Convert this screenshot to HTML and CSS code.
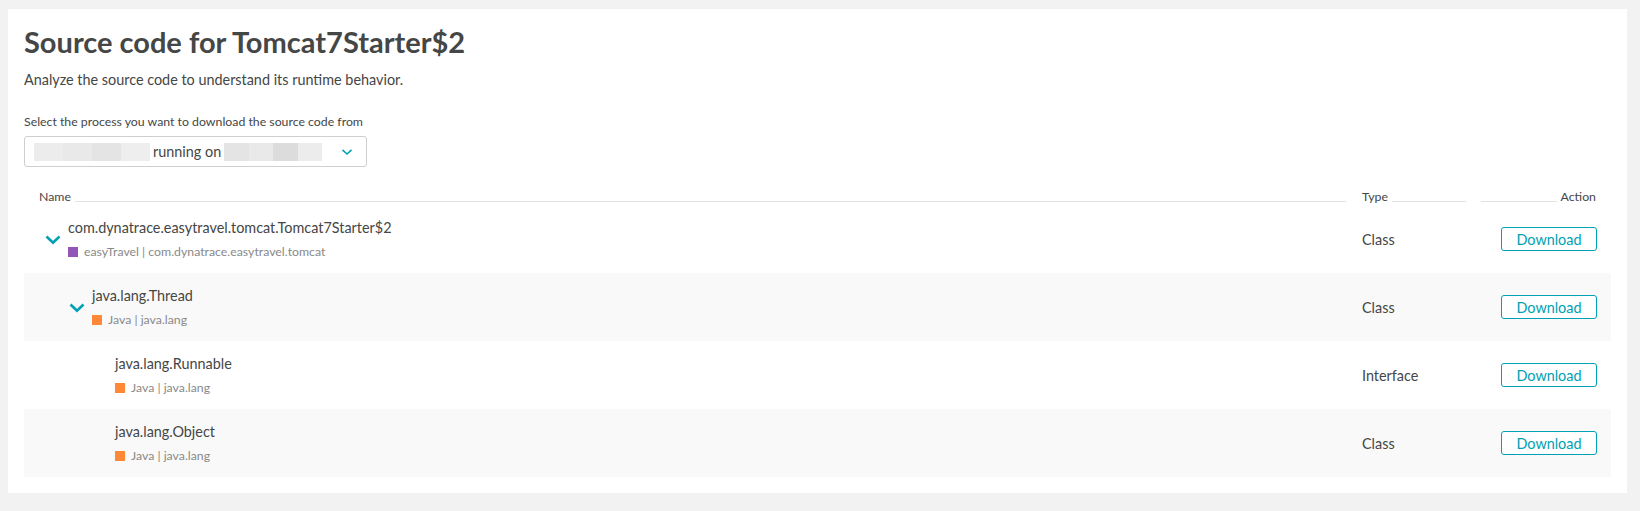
FILE: index.html
```html
<!DOCTYPE html>
<html lang="en">
<head>
    <meta charset="UTF-8">
    <title>Source code for Tomcat7Starter$2</title>
    <link rel="stylesheet" href="styles.css">
</head>
<body>
    <div class="card">
        <h1 class="titulo">Source code for Tomcat7Starter$2</h1>
        <p class="descricao">Analyze the source code to understand its runtime behavior.</p>

        <label class="rotulo">Select the process you want to download the source code from</label>
        <div class="seletor">
            <span class="borrado b1"></span><span class="borrado b2"></span><span class="borrado b3"></span><span class="borrado b4"></span>
            <span class="rodando">running on</span>
            <span class="borrado curto b3"></span><span class="borrado curto b2"></span><span class="borrado curto b5"></span><span class="borrado curto b1"></span>
            <svg class="seta-seletor" width="12" height="8" viewBox="0 0 12 8"><path d="M1.5 1.8 L6 6 L10.5 1.8" fill="none" stroke="#00a1b2" stroke-width="1.6"/></svg>
        </div>

        <div class="tabela">
            <div class="cabecalho">
                <div class="col-nome"><span>Name</span><span class="linha"></span></div>
                <div class="col-tipo"><span>Type</span><span class="linha"></span></div>
                <div class="col-acao"><span class="linha"></span><span>Action</span></div>
            </div>

            <div class="linha-tabela">
                <div class="col-nome nivel0">
                    <svg class="seta" width="16" height="10" viewBox="0 0 16 10"><path d="M1.5 1.5 L8 7.8 L14.5 1.5" fill="none" stroke="#00a1b2" stroke-width="2.6"/></svg>
                    <div class="item">
                        <div class="item-nome">com.dynatrace.easytravel.tomcat.Tomcat7Starter$2</div>
                        <div class="item-pacote"><span class="quadrado roxo"></span>easyTravel | com.dynatrace.easytravel.tomcat</div>
                    </div>
                </div>
                <div class="col-tipo">Class</div>
                <div class="col-acao"><button class="botao">Download</button></div>
            </div>

            <div class="linha-tabela">
                <div class="col-nome nivel1">
                    <svg class="seta" width="16" height="10" viewBox="0 0 16 10"><path d="M1.5 1.5 L8 7.8 L14.5 1.5" fill="none" stroke="#00a1b2" stroke-width="2.6"/></svg>
                    <div class="item">
                        <div class="item-nome">java.lang.Thread</div>
                        <div class="item-pacote"><span class="quadrado laranja"></span>Java | java.lang</div>
                    </div>
                </div>
                <div class="col-tipo">Class</div>
                <div class="col-acao"><button class="botao">Download</button></div>
            </div>

            <div class="linha-tabela">
                <div class="col-nome nivel2">
                    <span class="seta"></span>
                    <div class="item">
                        <div class="item-nome">java.lang.Runnable</div>
                        <div class="item-pacote"><span class="quadrado laranja"></span>Java | java.lang</div>
                    </div>
                </div>
                <div class="col-tipo">Interface</div>
                <div class="col-acao"><button class="botao">Download</button></div>
            </div>

            <div class="linha-tabela">
                <div class="col-nome nivel2">
                    <span class="seta"></span>
                    <div class="item">
                        <div class="item-nome">java.lang.Object</div>
                        <div class="item-pacote"><span class="quadrado laranja"></span>Java | java.lang</div>
                    </div>
                </div>
                <div class="col-tipo">Class</div>
                <div class="col-acao"><button class="botao">Download</button></div>
            </div>
        </div>
    </div>
</body>
</html>
```

FILE: styles.css
```css
body {
    margin: 0;
    padding: 9px 13px 18px 8px;
    background-color: #f2f2f2;
    font-family: Lato, "Open Sans", sans-serif;
    color: #454646;
}
.card {
    background-color: #fff;
    padding: 15px 16px 16px 16px;
}
.titulo {
    margin: 0;
    font-size: 29px;
    line-height: 36px;
    font-weight: bold;
    color: #454646;
}
.descricao {
    margin: 10px 0 0 0;
    font-size: 14.4px;
    line-height: 20px;
}
.rotulo {
    display: block;
    margin-top: 24px;
    font-size: 12.3px;
    line-height: 16px;
}
.seletor {
    margin-top: 6px;
    width: 343px;
    height: 31px;
    border: 1px solid #cfcfcf;
    border-radius: 3px;
    display: flex;
    align-items: center;
    padding-left: 9px;
    box-sizing: border-box;
    font-size: 14.4px;
    white-space: nowrap;
}
.borrado {
    display: inline-block;
    flex-shrink: 0;
    height: 18px;
    width: 29px;
}
.borrado.curto {
    width: 24.5px;
}
.b1 { background-color: #ececec; }
.b2 { background-color: #e9e9e9; }
.b3 { background-color: #e4e4e4; }
.b4 { background-color: #eeeeee; }
.b5 { background-color: #dcdcdc; }
.rodando {
    margin: 0 3px;
}
.seta-seletor {
    flex-shrink: 0;
    margin-left: auto;
    margin-right: 13px;
}
.tabela {
    margin-top: 22px;
}
.cabecalho {
    display: flex;
    font-size: 12.3px;
    line-height: 16px;
}
.cabecalho > div {
    display: flex;
    align-items: flex-end;
}
.cabecalho .linha {
    flex: 1;
    height: 1px;
    background-color: #e2e2e2;
    margin: 0 4px 3px 4px;
}
.cabecalho .col-nome {
    padding-left: 15px;
}
.cabecalho .col-tipo {
    padding-left: 12px;
    padding-right: 4px;
}
.cabecalho .col-acao {
    padding-left: 3px;
    padding-right: 15px;
}
.cabecalho .col-acao .linha {
    margin-left: 4px;
}
.col-nome {
    flex: 1;
}
.col-tipo {
    width: 124px;
    box-sizing: border-box;
}
.col-acao {
    width: 137px;
    box-sizing: border-box;
}
.linha-tabela {
    display: flex;
    align-items: center;
    height: 68px;
    font-size: 14.4px;
}
.linha-tabela:nth-child(odd) {
    background-color: #f9f9f9;
}
.linha-tabela .col-nome {
    display: flex;
    align-items: center;
}
.nivel0 { padding-left: 21px; }
.nivel1 { padding-left: 45px; }
.nivel2 { padding-left: 68px; }
.seta {
    display: inline-block;
    width: 16px;
    flex-shrink: 0;
    margin-right: 7px;
    margin-top: 2px;
}
.item-nome {
    line-height: 20px;
}
.item-pacote {
    margin-top: 6px;
    font-size: 12.3px;
    line-height: 16px;
    color: #898989;
    display: flex;
    align-items: center;
}
.quadrado {
    display: inline-block;
    width: 10px;
    height: 10px;
    margin-right: 6px;
}
.roxo { background-color: #9355b7; }
.laranja { background-color: #ff8836; }
.linha-tabela .col-tipo {
    padding-left: 12px;
}
.linha-tabela .col-acao {
    display: flex;
    justify-content: flex-end;
    padding-right: 14px;
}
.botao {
    width: 96px;
    height: 24px;
    border: 1px solid #00a1b2;
    border-radius: 3px;
    background-color: #fff;
    color: #00a1b2;
    font-family: Lato, "Open Sans", sans-serif;
    font-size: 14.4px;
    padding: 0;
}
```
